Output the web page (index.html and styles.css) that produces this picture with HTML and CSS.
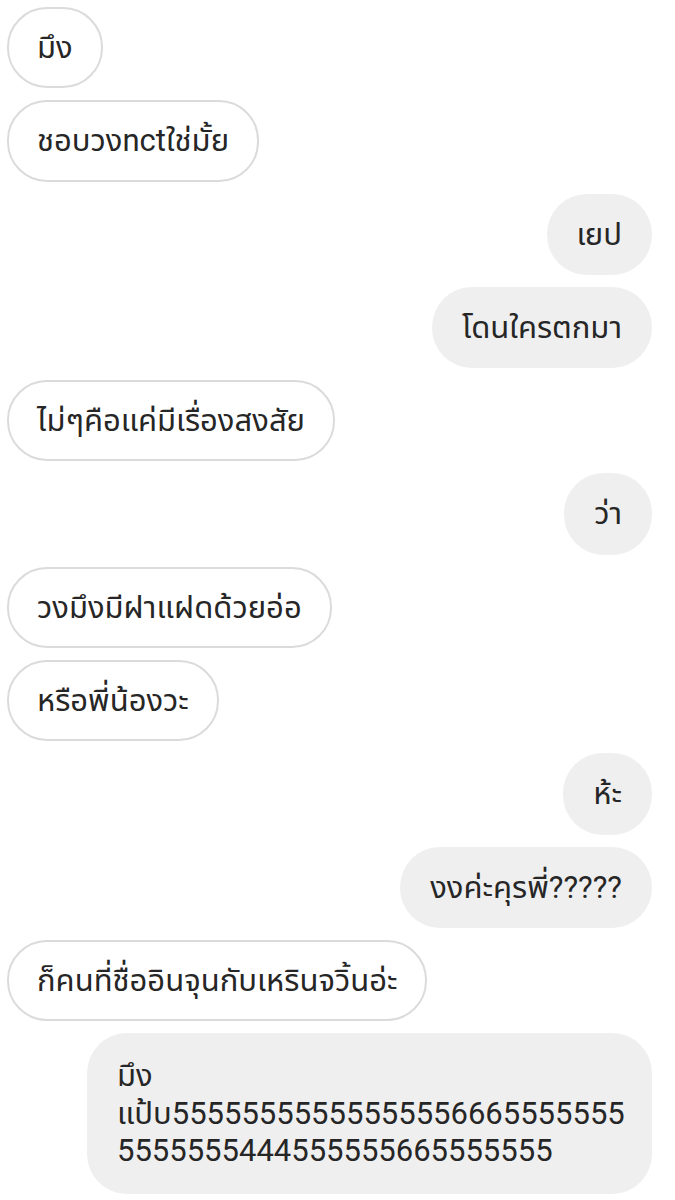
FILE: index.html
```html
<!DOCTYPE html>
<html lang="th">

    <head>
        <meta charset="UTF-8">
        <meta name="viewport" content="width=device-width, initial-scale=1.0">
        <title>Chat</title>
        <link rel="stylesheet" href="styles.css">
    </head>

    <body>
        <div class="chat">
            <div class="msg msg-in">มึง</div>
            <div class="msg msg-in">ชอบวงnctใช่มั้ย</div>
            <div class="msg msg-out">เยป</div>
            <div class="msg msg-out">โดนใครตกมา</div>
            <div class="msg msg-in">ไม่ๆคือแค่มีเรื่องสงสัย</div>
            <div class="msg msg-out">ว่า</div>
            <div class="msg msg-in">วงมึงมีฝาแฝดด้วยอ่อ</div>
            <div class="msg msg-in">หรือพี่น้องวะ</div>
            <div class="msg msg-out">ห้ะ</div>
            <div class="msg msg-out">งงค่ะคุรพี่?????</div>
            <div class="msg msg-in">ก็คนที่ชื่ออินจุนกับเหรินจวิ้นอ่ะ</div>
            <div class="msg msg-out msg-long">มึง<br>แป้บ55555555555555556665555555<br>5555555444555555665555555</div>
        </div>
    </body>

</html>
```

FILE: styles.css
```css
body {
    margin: 0;
    background: #ffffff;
    font-family: Roboto, "Noto Sans", "Noto Sans Thai", sans-serif;
    color: #262626;
}

.chat {
    display: flex;
    flex-direction: column;
    gap: 12px;
    padding: 7px 23px 0 7px;
}

.msg {
    font-size: 31px;
    line-height: 37.3px;
    padding: 22px 30px;
    border-radius: 40px;
    max-width: 505px;
    white-space: nowrap;
}

.msg-in {
    align-self: flex-start;
    background: #ffffff;
    border: 2px solid #dbdbdb;
    padding: 20px 28px;
}

.msg-out {
    align-self: flex-end;
    background: #efefef;
}

.msg-long {
    padding: 24px 30px;
    line-height: 37.5px;
}
```
